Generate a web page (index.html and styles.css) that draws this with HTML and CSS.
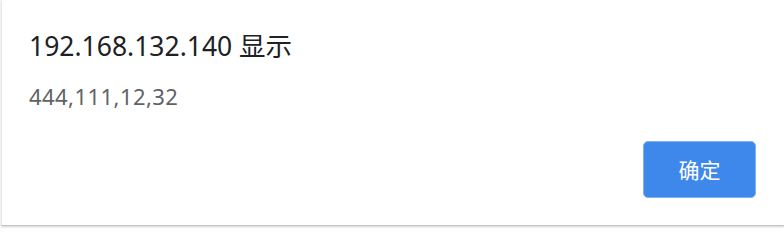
FILE: index.html
```html
<!DOCTYPE html>
<html lang="zh-CN">
<head>
<meta charset="utf-8">
<title>192.168.132.140 显示</title>
<link rel="stylesheet" href="styles.css">
</head>
<body>
<div class="dialog" role="alertdialog">
  <div class="title">192.168.132.140 显示</div>
  <div class="message">444,111,12,32</div>
  <div class="actions">
    <button class="btn" type="button">确定</button>
  </div>
</div>
</body>
</html>
```

FILE: styles.css
```css
html, body {
  margin: 0;
  padding: 0;
  background: #ffffff;
}

body {
  width: 784px;
  height: 229px;
  overflow: hidden;
  font-family: "Noto Sans", "Noto Sans CJK SC", sans-serif;
}

.dialog {
  box-sizing: border-box;
  height: 226px;
  margin-left: 1px;
  background: #ffffff;
  border-left: 1px solid #e6e6e6;
  border-bottom: 1px solid #c4c4c4;
  box-shadow: 0 1px 2px rgba(0, 0, 0, 0.18);
  padding: 28px 28px 0 27px;
  display: flex;
  flex-direction: column;
}

.title {
  font-size: 26.5px;
  line-height: 37px;
  color: #202124;
}

.message {
  margin-top: 16px;
  font-size: 22px;
  line-height: 30px;
  color: #5f6368;
  letter-spacing: 0.45px;
}

.actions {
  margin-top: auto;
  padding-bottom: 27px;
  display: flex;
  justify-content: flex-end;
}

.btn {
  box-sizing: border-box;
  width: 113px;
  height: 57px;
  padding: 0;
  border: 1px solid #7fb0f2;
  border-radius: 5px;
  background: #3f88eb;
  color: #ffffff;
  font-family: "Noto Sans CJK SC", sans-serif;
  font-size: 21px;
  line-height: 1;
}
```
